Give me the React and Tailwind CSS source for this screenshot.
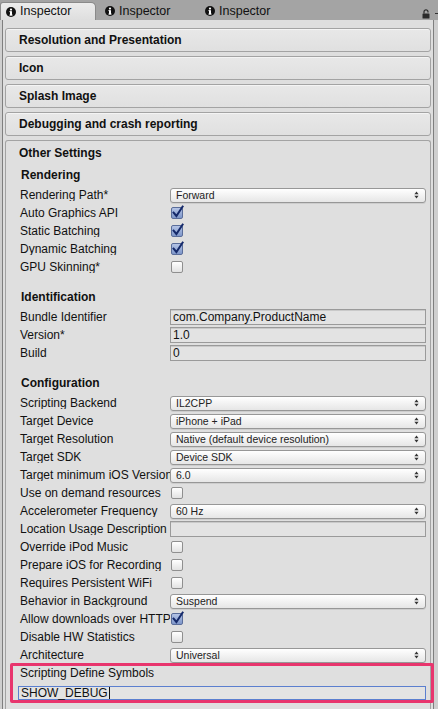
import React from "react";

function InfoIcon() {
  return (
    <span className="flex h-[10px] w-[10px] items-center justify-center rounded-full bg-[#111]">
      <svg width="10" height="10" viewBox="0 0 10 10">
        <circle cx="5" cy="2.6" r="1.1" fill="#fff" />
        <rect x="4" y="4.2" width="2" height="4.2" fill="#fff" />
        <rect x="3.4" y="4.2" width="1.2" height="0.9" fill="#fff" />
        <rect x="3.4" y="7.6" width="3.2" height="0.9" fill="#fff" />
      </svg>
    </span>
  );
}

function Tab({ active, children }) {
  return (
    <div
      className={
        "flex h-[18px] w-[96px] items-center gap-[4px] pl-[5px] " +
        (active
          ? "rounded-tr-[5px] rounded-tl-[3px] border border-b-0 border-[#8a8a8a] bg-linear-to-b from-[#ececec] to-[#dedede]"
          : "")
      }
    >
      <InfoIcon />
      <span className="text-[12.5px] leading-none text-[#111]">{children}</span>
    </div>
  );
}

function Arrows() {
  return (
    <svg width="5" height="8" viewBox="0 0 5 8" className="shrink-0">
      <path d="M2.5 0.5 L4.6 3.2 L0.4 3.2 Z" fill="#333" />
      <path d="M2.5 7.5 L4.6 4.8 L0.4 4.8 Z" fill="#333" />
    </svg>
  );
}

function Dropdown({ value }) {
  return (
    <div className="flex h-[15px] items-center justify-between rounded-[3px] border border-[#979797] bg-linear-to-b from-[#ffffff] to-[#e6e6e6] pl-[5px] pr-[6px] text-[10.5px] leading-none text-[#222] shadow-[0_1px_0_rgba(0,0,0,0.08)]">
      <span>{value}</span>
      <Arrows />
    </div>
  );
}

function Check({ on }) {
  if (on) {
    return (
      <div className="relative ml-[1px] h-[12px] w-[12px] rounded-[2px] border border-[#5a6d9a] bg-linear-to-b from-[#b4c4e6] to-[#7e96c9]">
        <svg
          width="14"
          height="14"
          viewBox="0 0 14 14"
          className="absolute left-[-1px] top-[-3px] overflow-visible"
        >
          <path
            d="M2.6 7.6 L5.4 11 L11.6 1.6"
            fill="none"
            stroke="#15296a"
            strokeWidth="2"
            strokeLinecap="square"
          />
        </svg>
      </div>
    );
  }
  return (
    <div className="ml-[1px] h-[12px] w-[12px] rounded-[2px] border border-[#8f8f8f] bg-linear-to-b from-[#ffffff] to-[#e2e2e2]" />
  );
}

function Field({ value }) {
  return (
    <div className="flex h-[16px] items-center border border-[#9a9a9a] bg-[#e3e3e3] pl-[2px] text-[12px] leading-none text-[#111] shadow-[inset_0_1px_0_#c9c9c9]">
      {value}
    </div>
  );
}

function Row({ label, children }) {
  return (
    <div className="flex h-[18px] items-center">
      <div className="w-[164px] shrink-0 overflow-hidden whitespace-nowrap pl-[14px] text-[12px] leading-none text-[#111]">
        {label}
      </div>
      <div className="min-w-0 flex-1 pr-[4px]">{children}</div>
    </div>
  );
}

function Section({ title, first, children }) {
  return (
    <div className={first ? "mt-[2px]" : "mt-[12px]"}>
      <div className="flex h-[18px] items-center pl-[15px] text-[12px] font-bold leading-none text-[#111]">
        {title}
      </div>
      <div className="mt-[2px] flex flex-col">{children}</div>
    </div>
  );
}

function Foldout({ title }) {
  return (
    <div className="flex h-[24px] items-center rounded-[3px] border border-[#a3a3a3] bg-linear-to-b from-[#e8e8e8] to-[#e0e0e0] pl-[13px] text-[12px] font-bold leading-none text-[#111] shadow-[inset_0_1px_0_#f4f4f4]">
      {title}
    </div>
  );
}

export default function App() {
  return (
    <div className="flex h-[709px] w-[438px] flex-col overflow-hidden bg-[#a4a4a4] font-['Liberation_Sans',Arial,sans-serif]">
      {/* tab bar */}
      <div className="relative flex h-[20px] shrink-0 items-end">
        <Tab active>Inspector</Tab>
        <div className="ml-[4px]">
          <Tab>Inspector</Tab>
        </div>
        <div className="ml-[4px]">
          <Tab>Inspector</Tab>
        </div>
        <div className="absolute right-[8px] top-[9px]">
          <svg width="8" height="10" viewBox="0 0 8 10">
            <path d="M2 4.5 V2.8 A2 2 0 0 1 6 2.8 V3.6" fill="none" stroke="#2a2a2a" strokeWidth="1.2" />
            <rect x="0.5" y="4.5" width="7" height="5" rx="0.6" fill="#2a2a2a" />
          </svg>
        </div>
        <div className="absolute right-[0px] top-[13px] h-[1px] w-[3px] bg-[#333]" />
      </div>

      {/* panel */}
      <div className="flex min-h-0 flex-1 bg-[#cfcfcf]">
        <div className="ml-[2px] flex w-[432px] flex-col border-l border-r border-[#7f7f7f] bg-[#dedede] px-[2px] pt-[8px]">
          <div className="flex flex-col gap-[4px]">
            <Foldout title="Resolution and Presentation" />
            <Foldout title="Icon" />
            <Foldout title="Splash Image" />
            <Foldout title="Debugging and crash reporting" />
          </div>

          <div className="mt-[4px] flex-1 rounded-t-[3px] border border-b-0 border-[#a3a3a3] bg-[#dfdfdf]">
            <div className="flex h-[23px] items-center pl-[13px] text-[12px] font-bold leading-none text-[#111]">
              Other Settings
            </div>

            <Section title="Rendering" first>
              <Row label="Rendering Path*">
                <Dropdown value="Forward" />
              </Row>
              <Row label="Auto Graphics API">
                <Check on />
              </Row>
              <Row label="Static Batching">
                <Check on />
              </Row>
              <Row label="Dynamic Batching">
                <Check on />
              </Row>
              <Row label="GPU Skinning*">
                <Check />
              </Row>
            </Section>

            <Section title="Identification">
              <Row label="Bundle Identifier">
                <Field value="com.Company.ProductName" />
              </Row>
              <Row label="Version*">
                <Field value="1.0" />
              </Row>
              <Row label="Build">
                <Field value="0" />
              </Row>
            </Section>

            <Section title="Configuration">
              <Row label="Scripting Backend">
                <Dropdown value="IL2CPP" />
              </Row>
              <Row label="Target Device">
                <Dropdown value="iPhone + iPad" />
              </Row>
              <Row label="Target Resolution">
                <Dropdown value="Native (default device resolution)" />
              </Row>
              <Row label="Target SDK">
                <Dropdown value="Device SDK" />
              </Row>
              <Row label="Target minimum iOS Version">
                <Dropdown value="6.0" />
              </Row>
              <Row label="Use on demand resources">
                <Check />
              </Row>
              <Row label="Accelerometer Frequency">
                <Dropdown value="60 Hz" />
              </Row>
              <Row label="Location Usage Description">
                <Field value="" />
              </Row>
              <Row label="Override iPod Music">
                <Check />
              </Row>
              <Row label="Prepare iOS for Recording">
                <Check />
              </Row>
              <Row label="Requires Persistent WiFi">
                <Check />
              </Row>
              <Row label="Behavior in Background">
                <Dropdown value="Suspend" />
              </Row>
              <Row label="Allow downloads over HTTP">
                <Check on />
              </Row>
              <Row label="Disable HW Statistics">
                <Check />
              </Row>
              <Row label="Architecture">
                <Dropdown value="Universal" />
              </Row>

              <div className="relative">
                <div className="flex h-[18px] items-center pl-[14px] text-[12px] leading-none text-[#111]">
                  Scripting Define Symbols
                </div>
                <div className="pl-[12px] pr-[4px] pt-[4px]">
                  <div className="flex h-[14px] items-center border border-[#5b7fcf] bg-[#e3e3e3] pl-[2px] text-[12px] leading-none text-[#111]">
                    SHOW_DEBUG
                    <span className="ml-[1px] h-[12px] w-[1px] bg-[#111]" />
                  </div>
                </div>
                <div className="pointer-events-none absolute bottom-[-3px] left-[4px] right-[-4px] top-[-1px] rounded-[2px] border-[3px] border-[#e8356d]" />
              </div>
            </Section>
          </div>
        </div>
      </div>
    </div>
  );
}
